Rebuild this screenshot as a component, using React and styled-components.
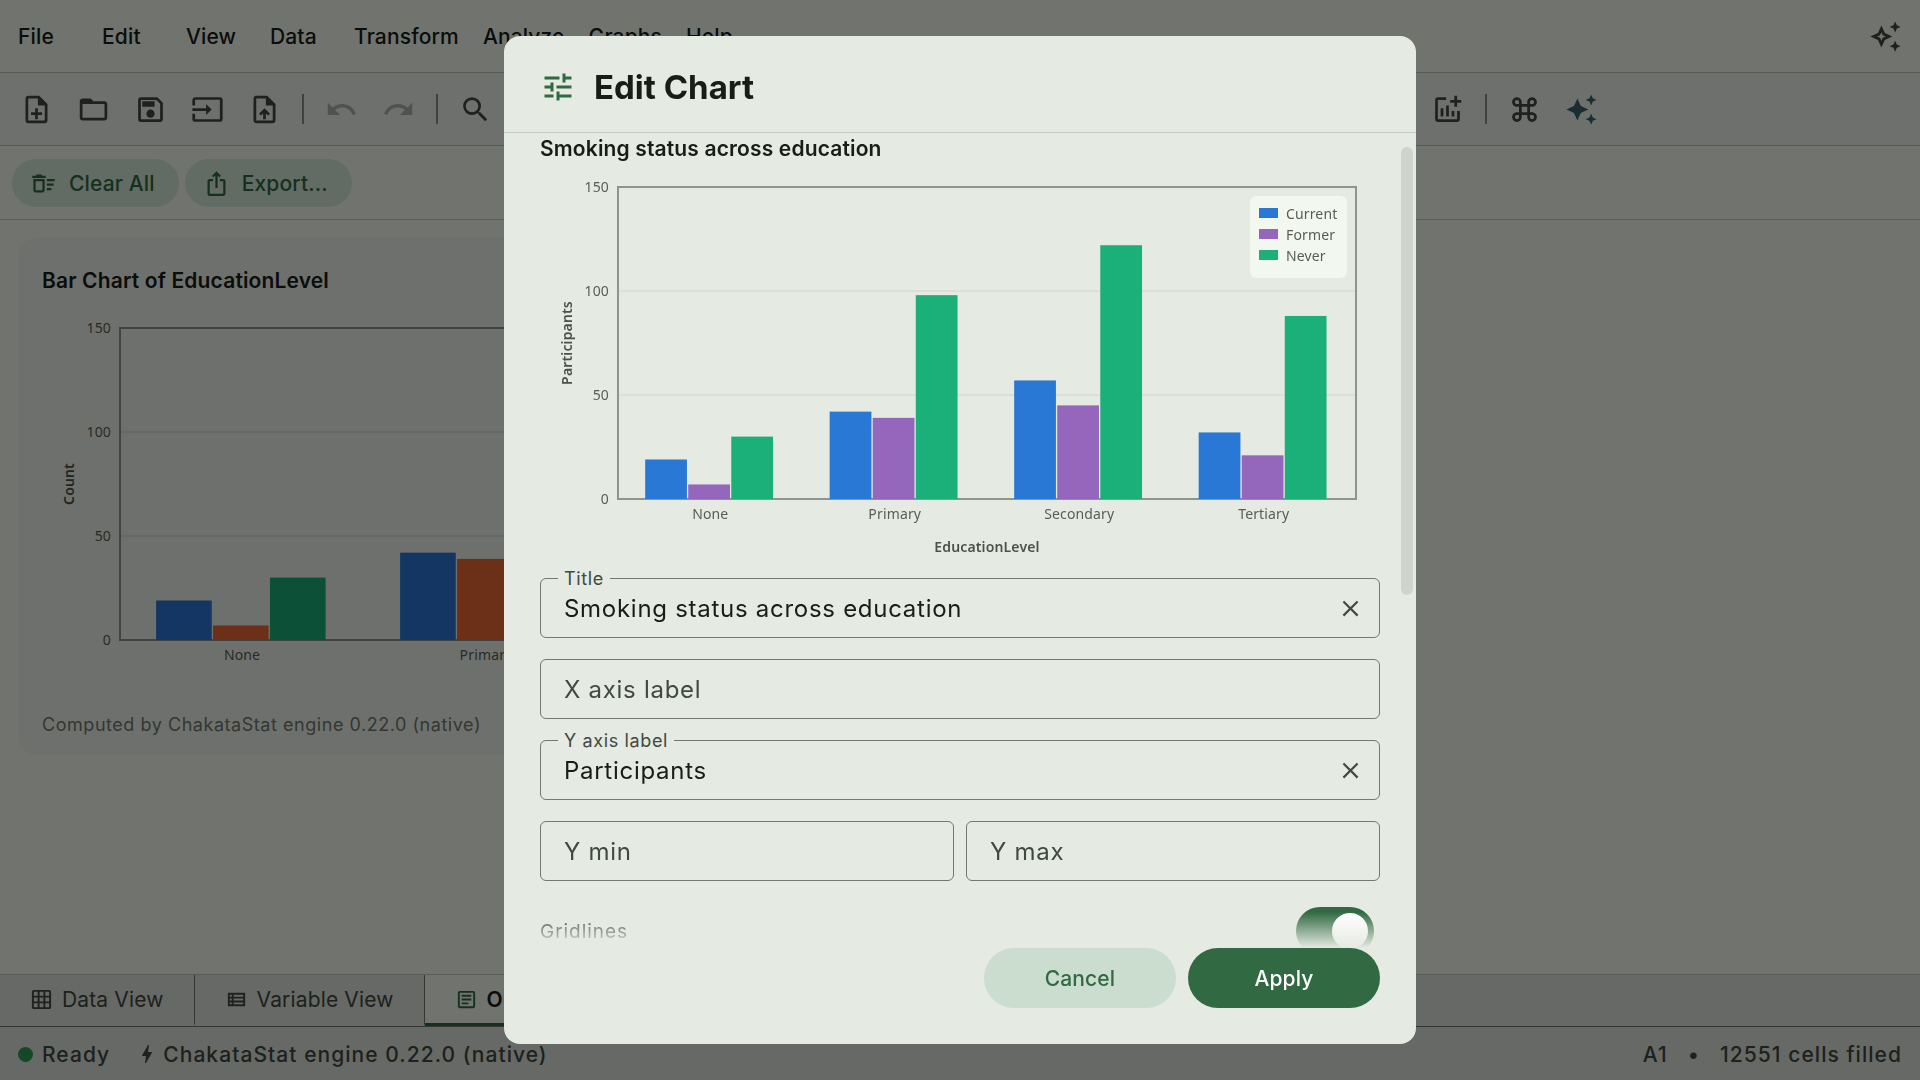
import React, { useState } from 'react';
import styled, { createGlobalStyle } from 'styled-components';
import {
    MdAutoAwesome,
    MdBolt,
    MdClose,
    MdContentCopy,
    MdContentCut,
    MdContentPaste,
    MdFilterAlt,
    MdFolderOpen,
    MdFunctions,
    MdGridOn,
    MdInput,
    MdIosShare,
    MdKeyboardCommandKey,
    MdOutlineAddchart,
    MdOutlineArticle,
    MdOutlineAutoAwesome,
    MdOutlineBarChart,
    MdOutlineCalculate,
    MdOutlineDeleteSweep,
    MdOutlineLabel,
    MdOutlineNoteAdd,
    MdOutlineSave,
    MdOutlineTableChart,
    MdOutlineUploadFile,
    MdOutlineViewList,
    MdPlaylistAdd,
    MdRedo,
    MdScatterPlot,
    MdSearch,
    MdShowChart,
    MdSort,
    MdTune,
    MdUndo,
    MdCallSplit,
    MdBalance,
} from 'react-icons/md';

const colors = {
    surface: '#f5faf0',
    low: '#f0f5ed',
    high: '#e5eae2',
    highest: '#dfe4dc',
    text: '#181d18',
    muted: '#424940',
    outline: '#727970',
    line: '#c2c9be',
    primary: '#316a42',
    tertiary: '#39656d',
};

const menus = ['File', 'Edit', 'View', 'Data', 'Transform', 'Analyze', 'Graphs', 'Help'];

const toolGroups = [
    [
        ['New', MdOutlineNoteAdd],
        ['Open', MdFolderOpen],
        ['Save', MdOutlineSave],
        ['Import', MdInput],
        ['Upload file', MdOutlineUploadFile],
    ],
    [
        ['Undo', MdUndo, 'disabled'],
        ['Redo', MdRedo, 'disabled'],
    ],
    [
        ['Find', MdSearch],
        ['Cut', MdContentCut],
        ['Copy', MdContentCopy],
        ['Paste', MdContentPaste],
    ],
    [
        ['Insert case', MdPlaylistAdd],
        ['Sort cases', MdSort],
        ['Select cases', MdFilterAlt],
        ['Split file', MdCallSplit],
        ['Weight cases', MdBalance],
        ['Value labels', MdOutlineLabel],
    ],
    [
        ['Compute', MdOutlineCalculate],
        ['Descriptives', MdFunctions],
        ['Tables', MdOutlineTableChart],
    ],
    [
        ['Bar chart', MdOutlineBarChart],
        ['Line chart', MdShowChart],
        ['Scatter plot', MdScatterPlot],
        ['Chart builder', MdOutlineAddchart],
    ],
    [
        ['Commands', MdKeyboardCommandKey],
        ['Assistant', MdAutoAwesome, 'accent'],
    ],
];

const categories = ['None', 'Primary', 'Secondary', 'Tertiary'];
const counts = {
    Current: [19, 42, 57, 32],
    Former: [7, 39, 45, 21],
    Never: [30, 98, 122, 88],
};
const countColors = { Current: '#2a78d6', Former: '#eb6834', Never: '#1baf7a' };
const editedColors = { Current: '#2a78d6', Former: '#9467bd', Never: '#1baf7a' };

const BarChart = ({ width, palette, xLabel, yLabel }) => {
    const left = 78;
    const right = width - 24;
    const top = 22;
    const bottom = 334;
    const band = (right - left) / categories.length;
    const step = (band * 0.7) / 3;
    const y = (value) => bottom - ((bottom - top) * value) / 150;

    return (
        <ChartSvg viewBox={`0 0 ${width} 392`} role="img" aria-label={`${yLabel} by ${xLabel}`}>
            {[50, 100].map((tick) => (
                <line key={tick} x1={left} x2={right} y1={y(tick)} y2={y(tick)} stroke="#d0d5cd" strokeWidth="1" />
            ))}
            <rect x={left} y={top} width={right - left} height={bottom - top} fill="none" stroke="#8f958e" strokeWidth="2" />
            {[0, 50, 100, 150].map((tick) => (
                <text key={tick} x={left - 9} y={y(tick) + 5} textAnchor="end">{tick}</text>
            ))}
            {categories.map((name, i) => (
                <g key={name}>
                    {Object.keys(counts).map((series, j) => (
                        <rect
                            key={series}
                            x={left + band * i + band * 0.15 + step * j - 0.5}
                            y={y(counts[series][i])}
                            width={step - 1.3}
                            height={bottom - y(counts[series][i])}
                            fill={palette[series]}
                        />
                    ))}
                    <text x={left + band * (i + 0.5)} y={bottom + 20} textAnchor="middle">{name}</text>
                </g>
            ))}
            <text className="axis" x={(left + right) / 2} y="387" textAnchor="middle">{xLabel}</text>
            <text className="axis" transform={`translate(32 ${(top + bottom) / 2}) rotate(-90)`} textAnchor="middle">{yLabel}</text>
            <rect x={right - 106} y="31" width="97" height="82" rx="6" fill="#f2f7ef" />
            {Object.keys(counts).map((series, i) => (
                <g key={series}>
                    <rect x={right - 97} y={43 + i * 21} width="19" height="10" fill={palette[series]} />
                    <text x={right - 70} y={54 + i * 21}>{series}</text>
                </g>
            ))}
        </ChartSvg>
    );
};

const TextField = ({ id, label, value, onChange }) => (
    <Field>
        {value && <FieldLabel htmlFor={id}>{label}</FieldLabel>}
        <FieldInput id={id} aria-label={label} placeholder={label} value={value} onChange={(e) => onChange(e.target.value)} />
        {value && (
            <ClearButton type="button" aria-label={`Clear ${label}`} onClick={() => onChange('')}>
                <MdClose size={27} />
            </ClearButton>
        )}
    </Field>
);

const EditChartDialog = () => {
    const [title, setTitle] = useState('Smoking status across education');
    const [xLabel, setXLabel] = useState('');
    const [yLabel, setYLabel] = useState('Participants');
    const [yMin, setYMin] = useState('');
    const [yMax, setYMax] = useState('');
    const [gridlines, setGridlines] = useState(true);

    return (
        <Dialog role="dialog" aria-modal="true" aria-labelledby="dialog-title">
            <DialogHeader>
                <MdTune size={36} />
                <h1 id="dialog-title">Edit Chart</h1>
            </DialogHeader>
            <DialogBody>
                <ScrollArea>
                    <div>
                        <ChartTitle>{title}</ChartTitle>
                        <BarChart width={840} palette={editedColors} xLabel={xLabel || 'EducationLevel'} yLabel={yLabel || 'Count'} />
                    </div>
                    <TextField id="title" label="Title" value={title} onChange={setTitle} />
                    <TextField id="x-label" label="X axis label" value={xLabel} onChange={setXLabel} />
                    <TextField id="y-label" label="Y axis label" value={yLabel} onChange={setYLabel} />
                    <FieldRow>
                        <TextField id="y-min" label="Y min" value={yMin} onChange={setYMin} />
                        <TextField id="y-max" label="Y max" value={yMax} onChange={setYMax} />
                    </FieldRow>
                    <SwitchRow>
                        <label htmlFor="gridlines">Gridlines</label>
                        <Switch id="gridlines" type="checkbox" checked={gridlines} onChange={(e) => setGridlines(e.target.checked)} />
                    </SwitchRow>
                </ScrollArea>
                <Fade />
                <ScrollThumb />
            </DialogBody>
            <DialogFooter>
                <DialogButton type="button">Cancel</DialogButton>
                <DialogButton type="button" $primary>Apply</DialogButton>
            </DialogFooter>
        </Dialog>
    );
};

const App = () => {
    return (
        <Page>
            <GlobalStyle />
            <MenuBar>
                {menus.map((name) => (
                    <MenuButton key={name} type="button">{name}</MenuButton>
                ))}
                <AssistantButton type="button" aria-label="Open assistant">
                    <MdOutlineAutoAwesome size={33} />
                </AssistantButton>
            </MenuBar>
            <Toolbar>
                {toolGroups.map((group, i) => (
                    <ToolGroup key={i}>
                        {group.map(([name, Icon, state]) => (
                            <ToolButton key={name} type="button" aria-label={name} disabled={state === 'disabled'} $accent={state === 'accent'}>
                                <Icon size={33} />
                            </ToolButton>
                        ))}
                    </ToolGroup>
                ))}
            </Toolbar>
            <ActionBar>
                <Chip type="button"><MdOutlineDeleteSweep size={27} />Clear All</Chip>
                <Chip type="button"><MdIosShare size={27} />Export...</Chip>
            </ActionBar>
            <Output>
                <Card>
                    <ChartTitle>Bar Chart of EducationLevel</ChartTitle>
                    <CardChart>
                        <BarChart width={1078} palette={countColors} xLabel="EducationLevel" yLabel="Count" />
                    </CardChart>
                    <CardFooter>Computed by ChakataStat engine 0.22.0 (native)</CardFooter>
                </Card>
            </Output>
            <Tabs>
                <Tab type="button"><MdGridOn size={23} />Data View</Tab>
                <Tab type="button"><MdOutlineViewList size={23} />Variable View</Tab>
                <Tab type="button" $active><MdOutlineArticle size={23} /><span>Output</span></Tab>
            </Tabs>
            <StatusBar>
                <StatusDot />
                <span>Ready</span>
                <Engine><MdBolt size={24} />ChakataStat engine 0.22.0 (native)</Engine>
                <CellInfo>
                    <span>A1</span>
                    <span>•</span>
                    <span>12551 cells filled</span>
                </CellInfo>
            </StatusBar>
            <Backdrop>
                <EditChartDialog />
            </Backdrop>
        </Page>
    );
};

export default App;

const GlobalStyle = createGlobalStyle`
* {
    box-sizing: border-box;
}
body {
    margin: 0;
    font-family: Inter, "Liberation Sans", sans-serif;
    font-size: 21px;
    letter-spacing: 0.007em;
    color: ${colors.text};
}
button, input {
    font: inherit;
    letter-spacing: inherit;
}
button {
    border: 0;
    padding: 0;
    background: none;
    color: inherit;
    cursor: pointer;
}
`

const Page = styled.div`
height: 100vh;
display: flex;
flex-direction: column;
background: ${colors.surface};
overflow: hidden;
`

const MenuBar = styled.nav`
flex: none;
height: 73px;
display: flex;
align-items: center;
padding: 0 18px 0 6px;
border-bottom: 1px solid ${colors.line};
`

const MenuButton = styled.button`
min-width: 84px;
height: 48px;
padding: 0 12px;
text-align: left;
font-weight: 500;
`

const AssistantButton = styled.button`
display: flex;
margin-left: auto;
color: ${colors.muted};
`

const Toolbar = styled.div`
flex: none;
height: 73px;
display: flex;
align-items: center;
padding: 0 8px;
background: ${colors.low};
border-bottom: 1px solid ${colors.line};
`

const ToolGroup = styled.div`
display: flex;
align-items: center;
& + &::before {
    content: "";
    width: 2px;
    height: 30px;
    margin: 0 9px;
    background: #8a9188;
}
`

const ToolButton = styled.button`
width: 57px;
height: 48px;
display: flex;
align-items: center;
justify-content: center;
color: ${props => props.$accent ? colors.tertiary : colors.muted};
&:disabled {
    opacity: 0.38;
}
`

const ActionBar = styled.div`
flex: none;
height: 74px;
display: flex;
align-items: center;
gap: 6px;
padding: 1px 12px 0;
border-bottom: 1px solid ${colors.line};
`

const Chip = styled.button`
height: 48px;
display: flex;
align-items: center;
gap: 12px;
padding: 0 24px 0 18px;
border-radius: 24px;
background: #d6e9d9;
color: ${colors.primary};
font-weight: 500;
`

const Output = styled.main`
flex: 1;
min-height: 0;
padding: 18px;
`

const Card = styled.section`
max-width: 1126px;
padding: 27px 24px 18px;
border-radius: 18px;
background: ${colors.low};
`

const ChartTitle = styled.h2`
margin: 0;
font-size: 21px;
line-height: 32px;
font-weight: 600;
`

const CardChart = styled.div`
padding: 9px 0 3px;
`

const ChartSvg = styled.svg`
display: block;
width: 100%;
height: auto;
font-family: "Noto Sans", sans-serif;
font-size: 14px;
text {
    fill: #585e57;
}
.axis {
    font-weight: 600;
    fill: #4c524b;
}
`

const CardFooter = styled.footer`
padding-top: 11px;
border-top: 1px solid #ebf0e8;
font-size: 18px;
line-height: 24px;
letter-spacing: 0.03em;
color: #727970;
`

const Tabs = styled.div`
flex: none;
height: 53px;
display: flex;
background: ${colors.highest};
border-top: 1px solid ${colors.line};
border-bottom: 1px solid ${colors.outline};
`

const Tab = styled.button`
display: flex;
align-items: center;
gap: 9px;
padding: 0 30px;
border-right: 1px solid ${colors.outline};
border-bottom: 3px solid ${props => props.$active ? colors.primary : 'transparent'};
background: ${props => props.$active ? colors.surface : 'none'};
color: ${props => props.$active ? colors.primary : colors.muted};
font-weight: ${props => props.$active ? 600 : 400};
span {
    color: ${colors.text};
}
`

const StatusBar = styled.footer`
flex: none;
height: 53px;
display: flex;
align-items: center;
padding: 1px 18px 0;
background: ${colors.highest};
color: ${colors.muted};
font-weight: 500;
letter-spacing: 0.05em;
`

const StatusDot = styled.i`
width: 15px;
height: 15px;
margin-right: 9px;
border-radius: 50%;
background: #2e9e5b;
`

const Engine = styled.span`
display: flex;
align-items: center;
gap: 4px;
margin-left: 25px;
`

const CellInfo = styled.div`
display: flex;
gap: 20px;
margin-left: auto;
`

const Backdrop = styled.div`
position: fixed;
inset: 0;
display: flex;
justify-content: center;
padding: 36px;
background: rgba(0, 0, 0, 0.54);
`

const Dialog = styled.div`
width: 100%;
max-width: 912px;
display: flex;
flex-direction: column;
border-radius: 16px;
background: ${colors.high};
overflow: hidden;
`

const DialogHeader = styled.header`
flex: none;
display: flex;
align-items: center;
gap: 18px;
padding: 30px 36px 24px;
border-bottom: 1px solid ${colors.line};
color: ${colors.primary};
h1 {
    margin: 0;
    font-size: 33px;
    line-height: 42px;
    font-weight: 700;
    letter-spacing: 0;
    color: ${colors.text};
}
`

const DialogBody = styled.div`
position: relative;
flex: 1;
min-height: 0;
display: flex;
`

const ScrollArea = styled.div`
flex: 1;
display: flex;
flex-direction: column;
gap: 21px;
padding: 0 36px;
overflow-y: auto;
scrollbar-width: none;
`

const Fade = styled.div`
position: absolute;
left: 0;
right: 0;
bottom: 0;
height: 36px;
background: linear-gradient(rgba(229, 234, 226, 0), ${colors.high});
pointer-events: none;
`

const ScrollThumb = styled.div`
position: absolute;
top: 14px;
right: 3px;
width: 12px;
height: 55%;
border-radius: 6px;
background: #cfd4cc;
`

const Field = styled.div`
position: relative;
flex: none;
display: flex;
align-items: center;
height: 60px;
border: 1px solid ${colors.outline};
border-radius: 6px;
letter-spacing: 0.03em;
`

const FieldLabel = styled.label`
position: absolute;
top: -12px;
left: 17px;
padding: 0 6px;
background: ${colors.high};
font-size: 18px;
line-height: 24px;
color: ${colors.muted};
`

const FieldInput = styled.input`
flex: 1;
min-width: 0;
height: 100%;
padding: 0 23px;
border: 0;
outline: 0;
background: none;
font-size: 24px;
letter-spacing: 0.03em;
color: ${colors.text};
&::placeholder {
    color: ${colors.muted};
    opacity: 1;
}
`

const ClearButton = styled.button`
display: flex;
padding: 9px 15px;
color: ${colors.muted};
`

const FieldRow = styled.div`
flex: none;
display: grid;
grid-template-columns: repeat(2, minmax(0, 1fr));
gap: 12px;
`

const SwitchRow = styled.div`
flex: none;
display: flex;
align-items: center;
justify-content: space-between;
padding: 5px 6px 5px 0;
font-size: 19px;
letter-spacing: 0.05em;
color: ${colors.muted};
`

const Switch = styled.input`
appearance: none;
display: flex;
align-items: center;
width: 78px;
height: 48px;
margin: 0;
padding: 6px;
border-radius: 24px;
background: ${props => props.checked ? colors.primary : colors.highest};
&::before {
    content: "";
    width: 36px;
    height: 36px;
    margin-left: ${props => props.checked ? 'auto' : '0'};
    border-radius: 50%;
    background: #fff;
}
`

const DialogFooter = styled.footer`
flex: none;
display: flex;
justify-content: flex-end;
gap: 12px;
padding: 0 36px 36px;
`

const DialogButton = styled.button`
width: 192px;
height: 60px;
border-radius: 30px;
background: ${props => props.$primary ? colors.primary : '#cbddcf'};
color: ${props => props.$primary ? '#fff' : colors.primary};
font-weight: 500;
`
